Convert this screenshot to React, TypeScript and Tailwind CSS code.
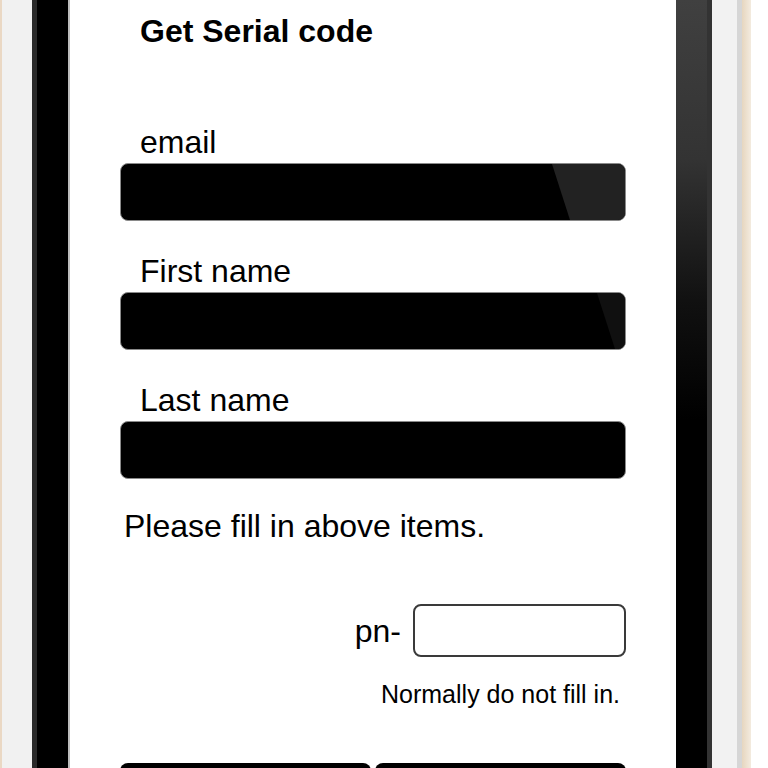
import React from "react";

function Field({ hl }: { hl?: "a" | "b" }) {
  return (
    <div className="relative h-[58px] w-full rounded-[8px] border border-[#8a8a8a] bg-black overflow-hidden">
      {hl === "a" && (
        <div className="absolute inset-0 bg-[#222222] [clip-path:polygon(431px_0,100%_0,100%_100%,449px_100%)]" />
      )}
      {hl === "b" && (
        <div className="absolute inset-0 bg-[#101010] [clip-path:polygon(476px_0,100%_0,100%_100%,494px_100%)]" />
      )}
    </div>
  );
}

export default function App() {
  return (
    <div className="flex h-[768px] w-[768px] overflow-hidden bg-white font-['Liberation_Sans',Arial,sans-serif] text-black">
      {/* left frame */}
      <div className="w-[2px] bg-[#ead8c4]" />
      <div className="w-[30px] bg-[#f1f1f1]" />
      <div className="w-[5px] bg-[#2a2a2a]" />
      <div className="w-[31px] bg-black" />
      <div className="w-[2px] bg-[#bdbdbd]" />

      {/* screen */}
      <div className="flex w-[606px] flex-col bg-white px-[50px] pt-[15px]">
        <div className="pl-[20px] text-[32px] font-bold leading-none">Get Serial code</div>

        <div className="mt-[79px] pl-[20px] text-[32px] leading-none">email</div>
        <div className="mt-[5px]">
          <Field hl="a" />
        </div>

        <div className="mt-[34px] pl-[20px] text-[32px] leading-none">First name</div>
        <div className="mt-[5px]">
          <Field hl="b" />
        </div>

        <div className="mt-[34px] pl-[20px] text-[32px] leading-none">Last name</div>
        <div className="mt-[5px]">
          <Field />
        </div>

        <div className="mt-[31px] pl-[4px] text-[32px] leading-none">Please fill in above items.</div>

        <div className="mt-[62px] flex items-center justify-end gap-[12px]">
          <span className="text-[32px] leading-none">pn-</span>
          <div className="h-[53px] w-[213px] rounded-[8px] border-2 border-[#3a3a3a] bg-white" />
        </div>

        <div className="mt-[25px] pr-[6px] text-right text-[25px] leading-none">Normally do not fill in.</div>

        <div className="mt-[56px] flex gap-[4px]">
          <div className="h-[60px] flex-1 rounded-[8px] bg-black" />
          <div className="h-[60px] flex-1 rounded-[8px] bg-black" />
        </div>
      </div>

      {/* right frame */}
      <div className="w-[31px] bg-[linear-gradient(to_bottom,#404040_0px,#333333_160px,#111111_300px,#000000_420px)]" />
      <div className="w-[5px] bg-[#333333]" />
      <div className="w-[25px] bg-[#f2f2f2]" />
      <div className="w-[5px] bg-[#d6d6d6]" />
      <div className="w-[9px] bg-[linear-gradient(to_right,#e6d6bf,#f3ebdf)]" />
      <div className="flex-1 bg-white" />
    </div>
  );
}
